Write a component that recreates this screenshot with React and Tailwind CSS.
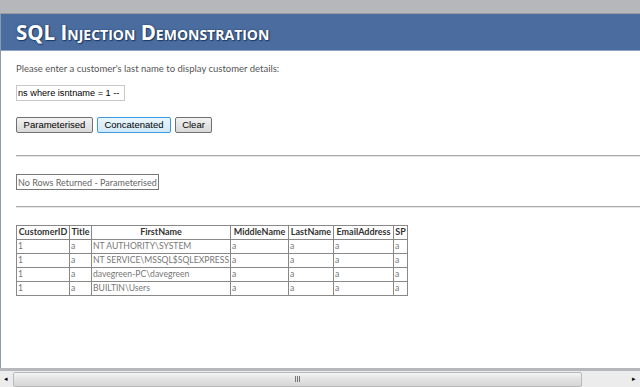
import React, { useState } from "react";

const columns = [
  { name: "CustomerID", w: "w-[53px]" },
  { name: "Title", w: "w-[22px]" },
  { name: "FirstName", w: "w-[139px]" },
  { name: "MiddleName", w: "w-[58px]" },
  { name: "LastName", w: "w-[45px]" },
  { name: "EmailAddress", w: "w-[60px]" },
  { name: "SP", w: "w-[14px]" },
];

const rows = [
  ["1", "a", "NT AUTHORITY\\SYSTEM", "a", "a", "a", "a"],
  ["1", "a", "NT SERVICE\\MSSQL$SQLEXPRESS", "a", "a", "a", "a"],
  ["1", "a", "davegreen-PC\\davegreen", "a", "a", "a", "a"],
  ["1", "a", "BUILTIN\\Users", "a", "a", "a", "a"],
];

const segoe = "font-['Lato','Open_Sans',sans-serif]";
const arial = "font-['Liberation_Sans',Arial,sans-serif]";

const App = () => {
  const [lastName, setLastName] = useState("ns where isntname = 1 --");

  return (
    <div className="h-[387px] w-[640px] flex flex-col bg-[#b6b7bb] overflow-hidden">
      <div className="h-[14px] border-b border-[#9c9da3]"></div>

      <div className="flex-1 bg-white border-l border-[#8d99ae] flex flex-col">
        <div className="h-[37px] bg-[#4a6c9f] border-b border-[#8ea3c3] flex items-center pl-[15px]">
          <h1
            className={`font-['Open_Sans',sans-serif] text-white font-bold text-[20.5px] [font-variant:small-caps] [text-shadow:0_0_2px_#1f3a63,1px_1px_1px_#1f3a63]`}
          >
            SQL Injection Demonstration
          </h1>
        </div>

        <div className="pl-[15px] pt-[12px]">
          <p className={`${segoe} text-[9.5px] leading-[12px] text-[#555]`}>
            Please enter a customer's last name to display customer details:
          </p>

          <input
            type="text"
            value={lastName}
            onChange={(e) => setLastName(e.target.value)}
            className={`mt-[10px] w-[109px] h-[16px] border border-[#c8c8c8] px-[1px] text-[9.2px] ${arial} text-black outline-none`}
          />

          <div className={`flex gap-[4px] mt-[15px] ${arial} text-[9.5px] text-black`}>
            <button className="h-[16px] w-[77px] border border-[#707070] rounded-[2px] bg-gradient-to-b from-[#f2f2f2] to-[#d8d8d8] leading-none">
              Parameterised
            </button>
            <button className="h-[16px] w-[74px] border border-[#3c9ae0] rounded-[2px] bg-gradient-to-b from-[#eaf6fd] to-[#d0e8f6] leading-none">
              Concatenated
            </button>
            <button className="h-[16px] w-[37px] border border-[#707070] rounded-[2px] bg-gradient-to-b from-[#f2f2f2] to-[#d8d8d8] leading-none">
              Clear
            </button>
          </div>

          <div className="mt-[22px] h-[2px] border-t border-[#aaa] bg-[#e6e6e6]"></div>

          <div className="mt-[17px] inline-flex items-center border border-[#777] px-[1px] h-[16px]">
            <span className={`${segoe} text-[9px] text-[#666] leading-none`}>
              No Rows Returned - Parameterised
            </span>
          </div>

          <div className="mt-[14px] h-[2px] border-t border-[#aaa] bg-[#e6e6e6]"></div>

          <table className={`mt-[17px] w-[391px] border-collapse table-fixed ${segoe}`}>
            <thead>
              <tr>
                {columns.map((c) => (
                  <th
                    key={c.name}
                    className={`${c.w} border border-[#888] h-[14px] p-0 font-bold text-[9px] text-[#333] leading-[12px] whitespace-nowrap overflow-hidden text-center`}
                  >
                    {c.name}
                  </th>
                ))}
              </tr>
            </thead>
            <tbody>
              {rows.map((r, i) => (
                <tr key={i}>
                  {r.map((v, j) => (
                    <td
                      key={j}
                      className="border border-[#888] h-[14px] p-0 pl-[1px] text-[8.6px] text-[#777] leading-[12px] whitespace-nowrap overflow-hidden text-left"
                    >
                      {v}
                    </td>
                  ))}
                </tr>
              ))}
            </tbody>
          </table>
        </div>
      </div>

      <div className="h-[3px] bg-[#b6b7bb]"></div>
      <div className="h-[16px] bg-[#ececec] flex items-center relative">
        <div className="w-[11px] flex justify-center text-[7px] text-black">◂</div>
        <div className="ml-[2px] w-[569px] h-[15px] border border-[#b9b9b9] rounded-[2px] bg-gradient-to-b from-[#f4f4f4] via-[#e2e2e2] to-[#d6d6d6] flex items-center justify-center">
          <div className="flex gap-[1px]">
            <span className="w-[1px] h-[6px] bg-[#777]"></span>
            <span className="w-[1px] h-[6px] bg-[#777]"></span>
            <span className="w-[1px] h-[6px] bg-[#777]"></span>
          </div>
        </div>
        <div className="flex-1 flex justify-end pr-[4px] text-[7px] text-black">▸</div>
      </div>
    </div>
  );
};

export default App;
